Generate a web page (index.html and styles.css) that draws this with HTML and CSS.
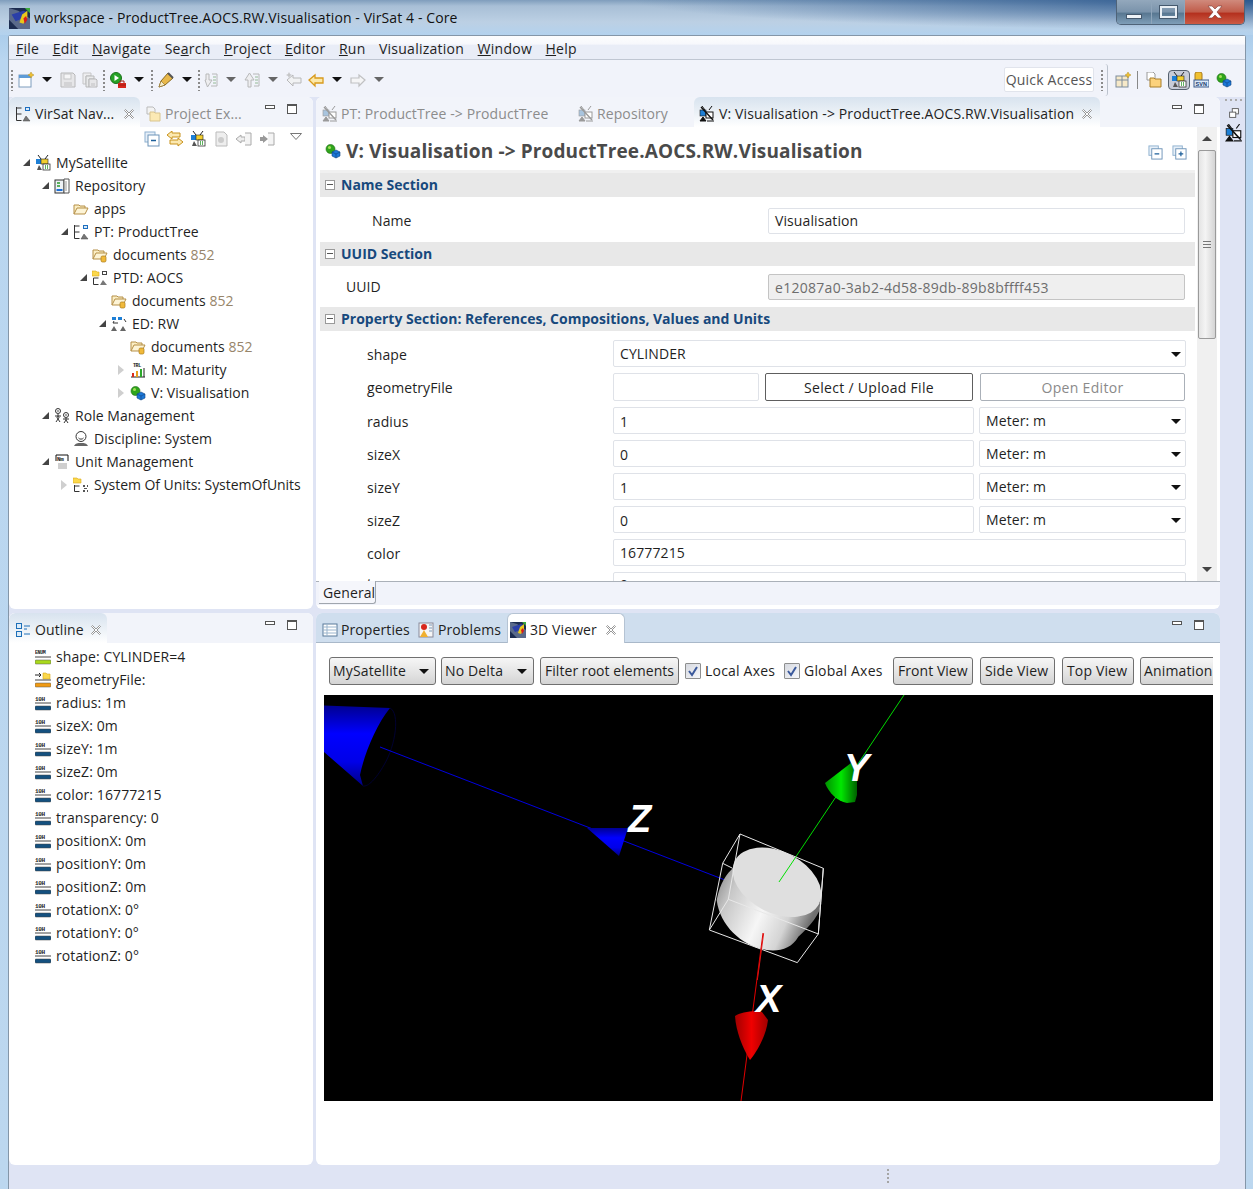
FILE: index.html
```html
<!DOCTYPE html>
<html lang="en">
<head>
    <meta charset="UTF-8">
    <title>workspace - ProductTree.AOCS.RW.Visualisation - VirSat 4 - Core</title>
    <link rel="stylesheet" href="styles.css">
</head>
<body>
    <!-- shared icon set -->
    <svg class="defs" width="0" height="0">
        <symbol id="i-app" viewBox="0 0 16 16">
            <rect width="16" height="16" fill="#1c2c50"/><path d="M0 0l7 2 9 6v8H7L0 9z" fill="#5a6a8a"/><path d="M2 5l9-3 3 1-6 6-3 1z" fill="#2a3fa8"/><path d="M10 5l4-3v5l-3 5-3-1z" fill="#e8c81c"/><path d="M11 8l2-2 1 3-2 3z" fill="#d81c1c"/><path d="M12 0h4v4z" fill="#3ca83c"/>
        </symbol>
        <symbol id="i-sat" viewBox="0 0 16 16">
            <path d="M3 0l3 4M13 0l-3 4" stroke="#222" fill="none"/><rect x="1" y="4" width="6" height="5" fill="#1d7fd6"/><rect x="6" y="4" width="7" height="5" fill="#f3cf2e" stroke="#222" stroke-width=".6"/><rect x="8" y="9" width="7" height="6" fill="#fff" stroke="#333" stroke-width=".8"/><path d="M10 11h1M12 11h1M10 13h1M12 13h1" stroke="#2a9a2a" stroke-width="1.4"/><path d="M2 15l2-5 3 5z" fill="#555"/>
        </symbol>
        <symbol id="i-repo" viewBox="0 0 16 16">
            <rect x="1" y="2" width="9" height="13" fill="#eef2f6" stroke="#333"/><path d="M3 5h3M3 8h3" stroke="#2a9a2a" stroke-width="1.4"/><path d="M2.500 12h6" stroke="#1d6fd6" stroke-width="2"/><path d="M10 1h5v14h-5z" fill="#fff" stroke="#555"/><path d="M12 3v10" stroke="#999"/>
        </symbol>
        <symbol id="i-folder" viewBox="0 0 16 16">
            <path d="M1 13V4h5l1 1h5v2" fill="#fbeec4" stroke="#b58f46"/><path d="M1 13l3-6h11l-3 6z" fill="#fdf4d6" stroke="#b58f46"/>
        </symbol>
        <symbol id="i-docs" viewBox="0 0 16 16">
            <path d="M1 12V3h5l1 1h5v2" fill="#fbeec4" stroke="#b58f46"/><path d="M1 12l3-6h11l-3 6z" fill="#fdf4d6" stroke="#b58f46"/><rect x="9" y="9" width="5" height="6" rx="1.500" fill="#f0b93a" stroke="#a97a1a" stroke-width=".7"/>
        </symbol>
        <symbol id="i-tree" viewBox="0 0 16 16">
            <path d="M1.500 1v13.500M1.500 2h5M1.500 8h5M1.500 14.500h5" stroke="#333" fill="none"/><rect x="10.500" y="1.500" width="4" height="3" fill="#dbe9f6" stroke="#1d6fc0"/><path d="M8 15l3-5 4 5z" fill="#777" stroke="#444" stroke-width=".5"/>
        </symbol>
        <symbol id="i-ptd" viewBox="0 0 16 16">
            <path d="M1.500 8v6.500M1.500 8h5M1.500 14.500h5" stroke="#333" fill="none"/><path d="M0 1h4l1 1h2v4H0z" fill="#fbd84c" stroke="#d8a81a" stroke-width=".6"/><rect x="10.500" y="1.500" width="4" height="3" fill="#fff" stroke="#444"/><path d="M8 15l3-5 4 5z" fill="#777"/>
        </symbol>
        <symbol id="i-ed" viewBox="0 0 16 16">
            <rect x="1" y="1" width="4" height="3" fill="#1d7fd6"/><rect x="7" y="1" width="4" height="3" fill="#1d7fd6"/><path d="M3 5l-1 2h5M13 3l2 3" stroke="#333" fill="none"/><path d="M0 15l3-5 3 5zM9 15l3-5 3 5z" fill="#666"/>
        </symbol>
        <symbol id="i-mat" viewBox="0 0 16 16">
            <path d="M1 15h14" stroke="#222"/><rect x="2" y="11" width="2" height="4" fill="#d82c1c"/><rect x="6" y="9" width="2" height="6" fill="#e8a01c"/><rect x="10" y="7" width="2" height="8" fill="#2ca82c"/><path d="M14 6v9" stroke="#222"/>
        </symbol>
        <symbol id="i-vis" viewBox="0 0 16 16">
            <circle cx="5.500" cy="6" r="4.500" fill="#2fa51c" stroke="#1d6a12" stroke-width=".6"/><circle cx="4.500" cy="4.500" r="1.500" fill="#a4e05a"/><path d="M7 9l4-2 4 2v4l-4 2-4-2z" fill="#1c78d8" stroke="#10457f" stroke-width=".6"/><path d="M7 9l4 2 4-2M11 11v4" stroke="#10457f" stroke-width=".6" fill="none"/>
        </symbol>
        <symbol id="i-role" viewBox="0 0 16 16">
            <g fill="#fff" stroke="#333"><circle cx="4" cy="3" r="2.500"/><path d="M1 8h6M4 6v5M2 14l2-3 2 3"/><circle cx="12" cy="7" r="2.500"/><path d="M9 11h6M12 10v2M10 15l2-3 2 3"/><circle cx="4" cy="9.500" r="1"/></g><circle cx="4" cy="3" r="1" fill="#888"/><circle cx="12" cy="7" r="1" fill="#888"/>
        </symbol>
        <symbol id="i-disc" viewBox="0 0 16 16">
            <circle cx="8" cy="5.500" r="5" fill="#fff" stroke="#333"/><path d="M5.500 7c1 1.500 4 1.500 5 0" stroke="#333" fill="none"/><path d="M1 15c2-3 3-3 7-3s5 0 7 3z" fill="#666"/>
        </symbol>
        <symbol id="i-unit" viewBox="0 0 16 16">
            <path d="M2 7V1h12v6" fill="none" stroke="#111"/><rect x="4" y="9" width="9" height="6" fill="#cfcfcf"/>
        </symbol>
        <symbol id="i-sou" viewBox="0 0 16 16">
            <path d="M0 1h4l1 1h3v4H0z" fill="#fbd84c" stroke="#d8a81a" stroke-width=".6"/><path d="M1.500 8v6.500M1.500 9h5M1.500 14.500h5" stroke="#333" fill="none"/><path d="M10 8h2v2h-2zM14 8h1v2h-1zM10 13h2v2h-2zM14 13h1v2h-1zM11 11h3v1h-3z" fill="#555"/>
        </symbol>
        <symbol id="i-enum" viewBox="0 0 16 16">
            <path d="M0 8h16" stroke="#444"/><rect y="11" width="16" height="4" rx="1" fill="#a9d91c" stroke="#555" stroke-width=".5"/>
        </symbol>
        <symbol id="i-res" viewBox="0 0 16 16">
            <path d="M0 3h6M4 1l2 2-2 2" stroke="#222" fill="none"/><path d="M8 1h3l1 1h3v5H8z" fill="#fbd84c" stroke="#d8a81a" stroke-width=".6"/><path d="M0 8h16" stroke="#444"/><rect y="11" width="16" height="4" rx="1" fill="#f09a14" stroke="#555" stroke-width=".5"/>
        </symbol>
        <symbol id="i-num" viewBox="0 0 16 16">
            <path d="M0 8h16" stroke="#444"/><rect y="11" width="16" height="4" rx="1" fill="#14507f" stroke="#444" stroke-width=".5"/>
        </symbol>
        <symbol id="i-outline" viewBox="0 0 16 16">
            <g fill="#dcebf8" stroke="#1d6fb8"><rect x="1.500" y="1.500" width="5" height="5"/><rect x="1.500" y="9.500" width="5" height="5"/></g><path d="M9 4h6M9 12h6M9 7h3" stroke="#1d6fb8"/>
        </symbol>
        <symbol id="i-project" viewBox="0 0 16 16">
            <path d="M1 1h6l2 2v5H1z" fill="#f3f3f3" stroke="#bbb"/><path d="M4 9V6h4l1 1h5v8H4z" fill="#fbe9b4" stroke="#d8c48e"/>
        </symbol>
        <symbol id="i-nosat" viewBox="0 0 16 16">
            <path d="M3 0l3 4M13 0l-3 4" stroke="currentColor" fill="none"/><rect x="1" y="4" width="6" height="6" fill="var(--ico-a)" stroke="currentColor" stroke-width=".6"/><rect x="7" y="6" width="7" height="6" fill="#fff" stroke="currentColor"/><path d="M1 15l3-4 3 4zM8 15h7" fill="currentColor" stroke="currentColor"/><path d="M2 1l12 13" stroke="currentColor" stroke-width="1.400"/>
        </symbol>
        <symbol id="i-collapse" viewBox="0 0 16 16">
            <rect x="1" y="1" width="10" height="10" fill="#e6eff8" stroke="#8eb0cf"/><rect x="4" y="4" width="11" height="11" fill="#fff" stroke="#6d93b8"/><path d="M7 9.500h5" stroke="#1d5f9a" stroke-width="1.300"/>
        </symbol>
        <symbol id="i-expand" viewBox="0 0 16 16">
            <rect x="1" y="1" width="10" height="10" fill="#e6eff8" stroke="#8eb0cf"/><rect x="4" y="4" width="11" height="11" fill="#fff" stroke="#6d93b8"/><path d="M7 9.500h5M9.500 7v5" stroke="#1d5f9a" stroke-width="1.300"/>
        </symbol>
        <symbol id="i-close" viewBox="0 0 12 12">
            <path d="M1.500 2.500l1-1L6 5l3.500-3.500 1 1L7 6l3.500 3.500-1 1L6 7l-3.500 3.500-1-1L5 6z" fill="#fff" stroke="#8a8a8a" stroke-width=".9"/>
        </symbol>
    </svg>

    <div class="titlebar">
        <svg class="ico app-ico"><use href="#i-app"/></svg>
        <span class="title-text">workspace - ProductTree.AOCS.RW.Visualisation - VirSat 4 - Core</span>
        <div class="win-btns">
            <div class="win-btn win-min"><span></span></div>
            <div class="win-btn win-max"><span></span></div>
            <div class="win-btn win-close">
                <svg width="18" height="14" viewBox="0 0 18 14"><path d="M2 1h4l3 3 3-3h4l-5 6 5 6h-4l-3-3-3 3H2l5-6z" fill="#fff" stroke="#7a3a34" stroke-width=".6"/></svg>
            </div>
        </div>
    </div>

    <div class="shell">
        <nav class="menubar">
            <span><u>F</u>ile</span>
            <span><u>E</u>dit</span>
            <span><u>N</u>avigate</span>
            <span>Se<u>a</u>rch</span>
            <span><u>P</u>roject</span>
            <span><u>E</u>ditor</span>
            <span><u>R</u>un</span>
            <span>Visualization</span>
            <span><u>W</u>indow</span>
            <span><u>H</u>elp</span>
        </nav>

        <div class="toolbar">
            <i class="handle"></i>
            <span class="tool">
                <svg class="ico" viewBox="0 0 16 16"><rect x="1" y="3" width="12" height="12" fill="#fff" stroke="#7c9cbc"/><rect x="1" y="3" width="12" height="3" fill="#5e9bd6"/><path d="M13 0l1 2 2 1-2 1-1 2-1-2-2-1 2-1z" fill="#f0c030" stroke="#b58f20" stroke-width=".5"/></svg>
            </span>
            <i class="drop"></i>
            <span class="tool dim">
                <svg class="ico" viewBox="0 0 16 16"><path d="M1 1h12l2 2v12H1z" fill="#e4e4e4" stroke="#aaa"/><rect x="4" y="2" width="7" height="5" fill="#f6f6f6" stroke="#bbb"/><rect x="4" y="10" width="8" height="5" fill="#ccc"/></svg>
            </span>
            <span class="tool dim">
                <svg class="ico" viewBox="0 0 16 16"><path d="M1 1h8v3H4v8H1z" fill="#eee" stroke="#bbb"/><path d="M4 4h8v3H7v8H4z" fill="#e8e8e8" stroke="#aaa"/><path d="M7 7h7l1 1v7H7z" fill="#e4e4e4" stroke="#aaa"/><rect x="9" y="11" width="4" height="4" fill="#ccc"/></svg>
            </span>
            <i class="handle"></i>
            <span class="tool">
                <svg class="ico" viewBox="0 0 16 16"><circle cx="6" cy="6" r="5.500" fill="#26a326" stroke="#1a701a"/><path d="M4.500 3v6l4.500-3z" fill="#fff"/><rect x="8" y="11" width="8" height="5" fill="#d8261c"/><path d="M10 11V9h4v2M8 13h8" stroke="#a01c14" fill="none"/></svg>
            </span>
            <i class="drop"></i>
            <i class="handle"></i>
            <span class="tool">
                <svg class="ico" viewBox="0 0 16 16"><path d="M1 15l2-6 7-8 5 5-8 7z" fill="#e8b84a" stroke="#8a6a20"/><path d="M1 15l2-6 4 4z" fill="#f6ecc8" stroke="#8a6a20" stroke-width=".6"/><path d="M10 1l5 5" stroke="#555" stroke-width="2"/></svg>
            </span>
            <i class="drop"></i>
            <i class="handle handle-narrow"></i>
            <span class="tool dim">
                <svg class="ico" viewBox="0 0 16 16"><path d="M1 1h3v6h3l-4.500 7L0 7h1z" transform="translate(3 1)" fill="#eee" stroke="#aaa"/><path d="M10 2h5v12h-6" fill="none" stroke="#aaa"/><path d="M11 5h3M11 8h3M11 11h3" stroke="#7eae7e"/></svg>
            </span>
            <i class="drop gray"></i>
            <span class="tool dim">
                <svg class="ico" viewBox="0 0 16 16"><path d="M4 15V8H1l4.500-7L10 8H7v7z" fill="#eee" stroke="#aaa"/><path d="M9 2h6v12h-5" fill="none" stroke="#aaa"/><path d="M11 5h3M11 8h3M11 11h3" stroke="#7eae7e"/></svg>
            </span>
            <i class="drop gray"></i>
            <span class="tool dim">
                <svg class="ico" viewBox="0 0 16 16"><path d="M1 8l6-5v3h8v5H7v3z" fill="#f2f2f2" stroke="#aaa"/><path d="M3 0l1 2 2 1-2 1-1 2-1-2-2-1 2-1z" fill="#bbb"/></svg>
            </span>
            <span class="tool">
                <svg class="ico" viewBox="0 0 16 16"><path d="M1 8l6-5v3h8v5H7v3z" fill="#fce8a8" stroke="#d89a1c" stroke-width="1.300"/></svg>
            </span>
            <i class="drop"></i>
            <span class="tool dim">
                <svg class="ico" viewBox="0 0 16 16"><path d="M15 8L9 3v3H1v5h8v3z" fill="#f6f6f6" stroke="#b5b5b5" stroke-width="1.200"/></svg>
            </span>
            <i class="drop gray"></i>

            <div class="toolbar-right">
                <span class="quick">Quick Access</span>
                <i class="handle"></i>
                <i class="curve"></i>
                <svg class="ico persp" viewBox="0 0 16 16"><rect x="1" y="4" width="12" height="11" fill="#f6e9c8" stroke="#7c8c9c"/><path d="M1 8h12M7 4v11" stroke="#7c8c9c"/><path d="M13 0l1 2 2 1-2 1-1 2-1-2-2-1 2-1z" fill="#f0c030" stroke="#b58f20" stroke-width=".5"/></svg>
                <i class="vsep"></i>
                <svg class="ico persp2" viewBox="0 0 16 16"><path d="M1 0h6l2 2v6H1z" fill="#fff" stroke="#9a9a9a"/><path d="M4 15V6h4l1 1h6v8z" fill="#fcd27c" stroke="#a87f2a"/></svg>
                <span class="persp-active"><svg class="ico"><use href="#i-sat"/></svg></span>
                <svg class="ico persp3" viewBox="0 0 16 16"><rect x="2" y="0" width="7" height="9" rx="2" fill="#f0c030" stroke="#a97a1a"/><rect x="1" y="8" width="15" height="7" fill="#dceafa" stroke="#3a5a8a"/><text x="2.500" y="14" font-size="5.500" font-family="Liberation Sans" font-weight="bold" fill="#16386a">SVN</text></svg>
                <svg class="ico persp4"><use href="#i-vis"/></svg>
            </div>
        </div>

        <div class="workbench">
            <div class="col-left">
                <section class="panel tree-panel">
                    <div class="tabbar">
                        <div class="tab tab-active tab-nav">
                            <svg class="ico"><use href="#i-tree"/></svg>
                            <span>VirSat Nav...</span>
                            <svg class="close"><use href="#i-close"/></svg>
                        </div>
                        <div class="tab tab-idle tab-proj">
                            <svg class="ico"><use href="#i-project"/></svg>
                            <span>Project Ex...</span>
                        </div>
                        <div class="win-ctl"><i class="ctl-min"></i><i class="ctl-max"></i></div>
                    </div>
                    <div class="viewbar">
                        <svg class="ico"><use href="#i-collapse"/></svg>
                        <svg class="ico" viewBox="0 0 16 16"><path d="M0 4l5-4v2h8v4H5v2zM16 11l-5-4v2H3v4h8v2z" fill="#fbe8b0" stroke="#c8921c"/></svg>
                        <svg class="ico"><use href="#i-sat"/></svg>
                        <svg class="ico" viewBox="0 0 16 16"><path d="M3 1h8l3 3v11H3z" fill="#eee" stroke="#bbb"/><circle cx="8" cy="9" r="3" fill="#ccc"/></svg>
                        <svg class="ico" viewBox="0 0 16 16"><path d="M0 8l5-4v2h4v4H5v2z" fill="#eee" stroke="#aaa"/><path d="M9 2h6v12H9" fill="#f4f4f4" stroke="#aaa"/></svg>
                        <svg class="ico" viewBox="0 0 16 16"><path d="M8 8L3 4v2H0v4h3v2z" transform="translate(1)" fill="#999"/><path d="M9 2h6v12H9" fill="#f4f4f4" stroke="#aaa"/></svg>
                        <svg class="view-menu" width="12" height="7" viewBox="0 0 12 7"><path d="M.5.500h11L6 6.500z" fill="#fff" stroke="#777"/></svg>
                    </div>
                    <ul class="tree">
                        <li class="d0"><i class="tw open"></i><svg class="ico"><use href="#i-sat"/></svg><span>MySatellite</span></li>
                        <li class="d1"><i class="tw open"></i><svg class="ico"><use href="#i-repo"/></svg><span>Repository</span></li>
                        <li class="d2"><i class="tw"></i><svg class="ico"><use href="#i-folder"/></svg><span>apps</span></li>
                        <li class="d2"><i class="tw open"></i><svg class="ico"><use href="#i-tree"/></svg><span>PT: ProductTree</span></li>
                        <li class="d3"><i class="tw"></i><svg class="ico"><use href="#i-docs"/></svg><span>documents <em>852</em></span></li>
                        <li class="d3"><i class="tw open"></i><svg class="ico"><use href="#i-ptd"/></svg><span>PTD: AOCS</span></li>
                        <li class="d4"><i class="tw"></i><svg class="ico"><use href="#i-docs"/></svg><span>documents <em>852</em></span></li>
                        <li class="d4"><i class="tw open"></i><svg class="ico"><use href="#i-ed"/></svg><span>ED: RW</span></li>
                        <li class="d5"><i class="tw"></i><svg class="ico"><use href="#i-docs"/></svg><span>documents <em>852</em></span></li>
                        <li class="d5"><i class="tw closed"></i><svg class="ico" viewBox="0 0 16 16"><use href="#i-mat"/><text class="ico-txt" x="3" y="5" font-size="5">TRL</text></svg><span>M: Maturity</span></li>
                        <li class="d5"><i class="tw closed"></i><svg class="ico"><use href="#i-vis"/></svg><span>V: Visualisation</span></li>
                        <li class="d1"><i class="tw open"></i><svg class="ico"><use href="#i-role"/></svg><span>Role Management</span></li>
                        <li class="d2"><i class="tw"></i><svg class="ico"><use href="#i-disc"/></svg><span>Discipline: System</span></li>
                        <li class="d1"><i class="tw open"></i><svg class="ico" viewBox="0 0 16 16"><use href="#i-unit"/><text class="ico-txt" x="3" y="7" font-size="6">Nm</text></svg><span>Unit Management</span></li>
                        <li class="d2 tree-long"><i class="tw closed"></i><svg class="ico"><use href="#i-sou"/></svg><span>System Of Units: SystemOfUnits</span></li>
                    </ul>
                </section>

                <section class="panel outline-panel">
                    <div class="tabbar">
                        <div class="tab tab-active tab-outline">
                            <svg class="ico"><use href="#i-outline"/></svg>
                            <span>Outline</span>
                            <svg class="close"><use href="#i-close"/></svg>
                        </div>
                        <div class="win-ctl"><i class="ctl-min"></i><i class="ctl-max"></i></div>
                    </div>
                    <ul class="outline">
                        <li><svg class="ico" viewBox="0 0 16 16"><use href="#i-enum"/><text class="ico-txt" x="0" y="5" font-size="5">ENUM</text></svg>shape: CYLINDER=4</li>
                        <li><svg class="ico"><use href="#i-res"/></svg>geometryFile:</li>
                        <li><svg class="ico" viewBox="0 0 16 16"><use href="#i-num"/><text class="ico-txt" x="0" y="5.500" font-size="6">10H</text></svg>radius: 1m</li>
                        <li><svg class="ico" viewBox="0 0 16 16"><use href="#i-num"/><text class="ico-txt" x="0" y="5.500" font-size="6">10H</text></svg>sizeX: 0m</li>
                        <li><svg class="ico" viewBox="0 0 16 16"><use href="#i-num"/><text class="ico-txt" x="0" y="5.500" font-size="6">10H</text></svg>sizeY: 1m</li>
                        <li><svg class="ico" viewBox="0 0 16 16"><use href="#i-num"/><text class="ico-txt" x="0" y="5.500" font-size="6">10H</text></svg>sizeZ: 0m</li>
                        <li><svg class="ico" viewBox="0 0 16 16"><use href="#i-num"/><text class="ico-txt" x="0" y="5.500" font-size="6">10H</text></svg>color: 16777215</li>
                        <li><svg class="ico" viewBox="0 0 16 16"><use href="#i-num"/><text class="ico-txt" x="0" y="5.500" font-size="6">10H</text></svg>transparency: 0</li>
                        <li><svg class="ico" viewBox="0 0 16 16"><use href="#i-num"/><text class="ico-txt" x="0" y="5.500" font-size="6">10H</text></svg>positionX: 0m</li>
                        <li><svg class="ico" viewBox="0 0 16 16"><use href="#i-num"/><text class="ico-txt" x="0" y="5.500" font-size="6">10H</text></svg>positionY: 0m</li>
                        <li><svg class="ico" viewBox="0 0 16 16"><use href="#i-num"/><text class="ico-txt" x="0" y="5.500" font-size="6">10H</text></svg>positionZ: 0m</li>
                        <li><svg class="ico" viewBox="0 0 16 16"><use href="#i-num"/><text class="ico-txt" x="0" y="5.500" font-size="6">10H</text></svg>rotationX: 0°</li>
                        <li><svg class="ico" viewBox="0 0 16 16"><use href="#i-num"/><text class="ico-txt" x="0" y="5.500" font-size="6">10H</text></svg>rotationY: 0°</li>
                        <li><svg class="ico" viewBox="0 0 16 16"><use href="#i-num"/><text class="ico-txt" x="0" y="5.500" font-size="6">10H</text></svg>rotationZ: 0°</li>
                    </ul>
                </section>
            </div>

            <div class="col-main">
                <section class="panel editor-panel">
                    <div class="tabbar">
                        <div class="tab tab-idle tab-pt">
                            <svg class="ico ico-off"><use href="#i-nosat"/></svg>
                            <span>PT: ProductTree -&gt; ProductTree</span>
                        </div>
                        <div class="tab tab-idle tab-repo">
                            <svg class="ico ico-off"><use href="#i-nosat"/></svg>
                            <span>Repository</span>
                        </div>
                        <div class="tab tab-active tab-vis">
                            <svg class="ico ico-on"><use href="#i-nosat"/></svg>
                            <span>V: Visualisation -&gt; ProductTree.AOCS.RW.Visualisation</span>
                            <svg class="close"><use href="#i-close"/></svg>
                        </div>
                        <div class="win-ctl"><i class="ctl-min"></i><i class="ctl-max"></i></div>
                    </div>
                    <div class="editor-body">
                        <div class="form-scroll">
                            <div class="form-head">
                                <svg class="ico"><use href="#i-vis"/></svg>
                                <h1>V: Visualisation -&gt; ProductTree.AOCS.RW.Visualisation</h1>
                                <svg class="ico head-act"><use href="#i-collapse"/></svg>
                                <svg class="ico head-act"><use href="#i-expand"/></svg>
                            </div>

                            <h2 class="section"><i class="toggle"></i>Name Section</h2>
                            <div class="row-name">
                                <label>Name</label>
                                <div class="field">Visualisation</div>
                            </div>

                            <h2 class="section"><i class="toggle"></i>UUID Section</h2>
                            <div class="row-uuid">
                                <label>UUID</label>
                                <div class="field disabled">e12087a0-3ab2-4d58-89db-89b8bffff453</div>
                            </div>

                            <h2 class="section"><i class="toggle"></i>Property Section: References, Compositions, Values and Units</h2>
                            <div class="props">
                                <div class="prop"><label>shape</label><div class="field combo wide">CYLINDER<i class="arrow"></i></div></div>
                                <div class="prop prop-tall"><label>geometryFile</label><div class="field file"></div><div class="btn btn-upload">Select / Upload File</div><div class="btn btn-open">Open Editor</div></div>
                                <div class="prop"><label>radius</label><div class="field num">1</div><div class="field combo unit">Meter: m<i class="arrow"></i></div></div>
                                <div class="prop"><label>sizeX</label><div class="field num">0</div><div class="field combo unit">Meter: m<i class="arrow"></i></div></div>
                                <div class="prop"><label>sizeY</label><div class="field num">1</div><div class="field combo unit">Meter: m<i class="arrow"></i></div></div>
                                <div class="prop"><label>sizeZ</label><div class="field num">0</div><div class="field combo unit">Meter: m<i class="arrow"></i></div></div>
                                <div class="prop"><label>color</label><div class="field wide">16777215</div></div>
                                <div class="prop prop-cut"><label>t</label><div class="field wide">0</div></div>
                            </div>
                        </div>
                        <div class="scrollbar">
                            <i class="sb-up"></i>
                            <div class="sb-track"><div class="sb-thumb"><b></b></div></div>
                            <i class="sb-down"></i>
                        </div>
                    </div>
                    <div class="pagebar"><span class="page-tab">General</span></div>
                </section>

                <section class="panel viewer-panel">
                    <div class="tabbar blue">
                        <div class="tab tab-plain tab-props">
                            <svg class="ico" viewBox="0 0 16 16"><rect x="1" y="2" width="14" height="12" fill="#fff" stroke="#5a7a9a"/><path d="M1 5h14M1 8h14M1 11h14M5 2v12" stroke="#9ab4cc"/></svg>
                            <span>Properties</span>
                        </div>
                        <div class="tab tab-plain tab-probs">
                            <svg class="ico" viewBox="0 0 16 16"><rect x="1" y="1" width="14" height="14" fill="#f6f6f6" stroke="#8a8a9a"/><circle cx="6" cy="5" r="3" fill="#d8261c"/><path d="M6 8l4 7H2z" fill="#f0b030"/><path d="M11 3h3M11 6h3M11 9h3" stroke="#7a9aba"/></svg>
                            <span>Problems</span>
                        </div>
                        <div class="tab tab-white tab-3d">
                            <svg class="ico"><use href="#i-app"/></svg>
                            <span>3D Viewer</span>
                            <svg class="close"><use href="#i-close"/></svg>
                        </div>
                        <div class="win-ctl"><i class="ctl-min"></i><i class="ctl-max"></i></div>
                    </div>
                    <div class="viewer-body">
                        <div class="viewer-tools">
                            <div class="vbtn vcombo v-sat">MySatellite<i class="arrow"></i></div>
                            <div class="vbtn vcombo v-delta">No Delta<i class="arrow"></i></div>
                            <div class="vbtn v-filter">Filter root elements</div>
                            <label class="check v-local"><i class="box"><svg width="12" height="12" viewBox="0 0 12 12"><path d="M2 6l3 4 5-8" fill="none" stroke="#3c5a9c" stroke-width="2"/></svg></i>Local Axes</label>
                            <label class="check v-global"><i class="box"><svg width="12" height="12" viewBox="0 0 12 12"><path d="M2 6l3 4 5-8" fill="none" stroke="#3c5a9c" stroke-width="2"/></svg></i>Global Axes</label>
                            <div class="vbtn v-front">Front View</div>
                            <div class="vbtn v-side">Side View</div>
                            <div class="vbtn v-top">Top View</div>
                            <div class="vbtn v-anim">Animation</div>
                        </div>
                        <svg class="scene" width="889" height="406" viewBox="0 0 889 406">
                            <defs>
                                <linearGradient id="cyl" x1="0" y1="0" x2="1" y2="0.35">
                                    <stop offset="0" stop-color="#808080"/>
                                    <stop offset=".22" stop-color="#c8c8c8"/>
                                    <stop offset=".55" stop-color="#f6f6f6"/>
                                    <stop offset=".8" stop-color="#d4d4d4"/>
                                    <stop offset="1" stop-color="#707070"/>
                                </linearGradient>
                                <linearGradient id="cone-b" x1="0" y1="0" x2="0" y2="1">
                                    <stop offset="0" stop-color="#000090"/>
                                    <stop offset=".35" stop-color="#0000ff"/>
                                    <stop offset=".7" stop-color="#0000e8"/>
                                    <stop offset="1" stop-color="#000080"/>
                                </linearGradient>
                                <linearGradient id="cone-g" x1="0" y1="0" x2="1" y2="0">
                                    <stop offset="0" stop-color="#009000"/>
                                    <stop offset=".5" stop-color="#00e800"/>
                                    <stop offset="1" stop-color="#006000"/>
                                </linearGradient>
                                <linearGradient id="cone-r" x1="0" y1="0" x2="1" y2="0">
                                    <stop offset="0" stop-color="#a00000"/>
                                    <stop offset=".5" stop-color="#f00000"/>
                                    <stop offset="1" stop-color="#a00000"/>
                                </linearGradient>
                            </defs>

                            <path d="M0 10.500L66 13C52 30 40 60 36 80L39 91L0 57z" fill="url(#cone-b)"/>
                            <path d="M66 13C76 18 72 50 60 70C52 84 44 92 39 91" fill="none" stroke="#000030"/>
                            <path d="M56 52L401 185" stroke="#0000e0" stroke-width="1"/>
                            <path d="M263 133L304 133L295 161z" fill="url(#cone-b)"/>

                            <path d="M580 0L455 187" stroke="#00d800" stroke-width="1"/>
                            <path d="M527 68L533 82L533 100L531 107L523 108C513 106 505 98 501 88z" fill="url(#cone-g)"/>

                            <g transform="translate(336 85) scale(.3333)">
                                <path d="M170 360C180 310 200 280 222 262L484 370C482 400 450 440 415 470C395 505 360 515 320 510C250 500 180 440 170 360z" fill="url(#cyl)"/>
                                <ellipse cx="351" cy="307" rx="142" ry="92" transform="rotate(27 351 307)" fill="#dfdfdf"/>
                                <g fill="none" stroke="#e8e8e8" stroke-width="3">
                                    <path d="M240 162L490 265L475 462L412 548L148 450L205 358L240 162L188 250L148 450"/>
                                    <path d="M205 358L475 462M490 265L475 462M188 250L218 265"/>
                                </g>
                                <path d="M357 306L407 232" stroke="#00e000" stroke-width="3" fill="none"/>
                                <path d="M311 460L292 600" stroke="#e02020" stroke-width="3"/>
                            </g>
                            <path d="M439 238L417 406" stroke="#e00000" stroke-width="1"/>
                            <path d="M411 321C416 317 432 315 438 317L444 325C442 342 432 358 426 365C418 352 412 336 411 321z" fill="url(#cone-r)"/>

                            <text class="axis" x="304" y="137">Z</text>
                            <text class="axis" x="520" y="86">Y</text>
                            <text class="axis" x="432" y="317">X</text>
                        </svg>
                    </div>
                </section>
            </div>

            <aside class="trim">
                <i class="trim-dots"></i>
                <svg class="ico trim-restore" viewBox="0 0 16 16"><rect x="6" y="3" width="7" height="6" fill="#fff" stroke="#555"/><rect x="3" y="7" width="7" height="6" fill="#fff" stroke="#555"/></svg>
                <svg class="ico ico-on trim-ico"><use href="#i-nosat"/></svg>
            </aside>
        </div>
        <div class="statusbar"><i class="status-dots"></i></div>
    </div>
</body>
</html>
```

FILE: styles.css
```css
:root {
    --frame: #dfe4f4;
    --tabbar: #f2f4fa;
    --border: #d7dbe4;
    --text: #1f1f1f;
    --section: #e8e8e8;
    --section-text: #17497d;
    --ico-a: #1d7fd6;
}

* {
    margin: 0;
    padding: 0;
    box-sizing: border-box;
}

html, body {
    width: 1253px;
    height: 1189px;
    overflow: hidden;
}

body {
    font-family: "Open Sans", "Noto Sans", sans-serif;
    font-size: 14px;
    line-height: 18px;
    letter-spacing: .1px;
    color: var(--text);
    background: linear-gradient(180deg, #8fb0d0 0, #a9cbea 30px, #b9d6f0 60px, #bcd7ef 100%);
}

.defs {
    position: absolute;
}

ul {
    list-style: none;
}

i {
    display: block;
    font-style: normal;
}

.ico {
    width: 16px;
    height: 16px;
    flex: none;
    display: block;
}

.ico-txt {
    font-family: "Liberation Mono", monospace;
    font-weight: 700;
    letter-spacing: -.4px;
    fill: #222;
}

.close {
    width: 12px;
    height: 12px;
    flex: none;
}

/* window title */
.titlebar {
    height: 35px;
    display: flex;
    align-items: flex-start;
    padding-left: 9px;
    background:
        radial-gradient(ellipse 620px 30px at 100% 0, rgba(40, 85, 140, .95), rgba(40, 85, 140, 0)),
        linear-gradient(180deg, #7f9dbc 0, #a8bfd6 6px, #bcd0e4 22px, #b3d2ee 35px);
}

.app-ico {
    width: 21px;
    height: 21px;
    margin-top: 8px;
}

.title-text {
    margin: 8px 0 0 4px;
    font-size: 14px;
    line-height: 20px;
    color: #111;
}

.win-btns {
    display: flex;
    margin-left: auto;
    margin-right: 8px;
    height: 25px;
    border: 1px solid #4f6378;
    border-top: 0;
    border-radius: 0 0 5px 5px;
    overflow: hidden;
}

.win-btn {
    display: flex;
    align-items: center;
    justify-content: center;
    border-right: 1px solid #8fa5ba;
    background: linear-gradient(180deg, #93a8bc 0, #7a93ab 50%, #587791 55%, #7f9eb8 100%);
}

.win-min {
    width: 35px;
}

.win-min span {
    width: 16px;
    height: 5px;
    margin-top: 8px;
    background: #eef3f8;
    border: 1px solid #45596e;
}

.win-max {
    width: 33px;
}

.win-max span {
    width: 17px;
    height: 12px;
    border: 2px solid #e8eef4;
    outline: 1px solid #45596e;
}

.win-close {
    width: 59px;
    border-right: 0;
    background: linear-gradient(180deg, #d08a7c 0, #c05c4a 50%, #b4301e 55%, #cc5a44 100%);
}

/* main shell */
.shell {
    margin-left: 8px;
    width: 1238px;
    height: 1154px;
    background: var(--frame);
    border: 1px solid #8496a8;
    border-bottom: 0;
    border-radius: 3px 3px 0 0;
}

.menubar {
    height: 24px;
    display: flex;
    align-items: center;
    gap: 13.500px;
    padding: 2px 0 0 7px;
    letter-spacing: .25px;
    background: linear-gradient(180deg, #fcfdfe 0, #f7f8fc 35%, #e9edf7 40%, #e9edf7 100%);
    border-bottom: 1px solid #bfc6d2;
}

.toolbar {
    height: 37px;
    display: flex;
    align-items: center;
    padding-top: 2px;
    background: #f1f3fa;
}

.handle {
    width: 6px;
    height: 22px;
    flex: none;
    background: radial-gradient(circle, #8a8a8a 1px, transparent 1.200px) center top / 2px 4px repeat-y;
}

.handle-narrow {
    width: 4px;
    margin-right: -2px;
}

.tool {
    width: 22px;
    display: flex;
    justify-content: center;
    flex: none;
}

.dim {
    opacity: .8;
}

.drop {
    width: 20px;
    flex: none;
    position: relative;
    height: 5px;
}

.drop::before {
    content: "";
    display: block;
    width: 0;
    margin: 0 auto;
    border: 5px solid transparent;
    border-top: 5px solid #111;
    border-bottom: 0;
}

.drop.gray::before {
    border-top-color: #666;
}

.toolbar-right {
    margin-left: auto;
    display: flex;
    align-items: center;
    height: 100%;
    padding-right: 13px;
}

.quick {
    width: 90px;
    height: 25px;
    background: #fff;
    border: 1px solid #e1e4ec;
    border-radius: 2px;
    color: #555;
    font-size: 14px;
    line-height: 23px;
    letter-spacing: .2px;
    text-align: center;
    white-space: nowrap;
    margin-right: 5px;
}

.curve {
    width: 3px;
    height: 32px;
    border-right: 1px solid #bbc2cd;
    border-radius: 0 3px 3px 0;
    margin-right: 7px;
}

.vsep {
    width: 1px;
    height: 18px;
    background: #888;
    margin: 0 8px 0 6px;
}

.persp-active {
    width: 22px;
    height: 20px;
    margin: 0 3px 0 6px;
    display: flex;
    align-items: center;
    justify-content: center;
    background: #c7ccd8;
    border: 1px solid #55606e;
    border-radius: 4px;
}

.persp4 {
    margin-left: 7px;
}

/* workbench grid */
.workbench {
    display: grid;
    grid-template-columns: 304px 904px 22px;
    column-gap: 3px;
    height: 1068px;
}

.col-left,
.col-main {
    display: grid;
    grid-template-rows: 512px 552px;
    row-gap: 4px;
}

.panel {
    display: flex;
    flex-direction: column;
    background: #fff;
    border-radius: 6px;
    overflow: hidden;
    min-height: 0;
}

.tabbar {
    height: 30px;
    flex: none;
    display: flex;
    background: var(--tabbar);
    position: relative;
}

.tabbar.blue {
    height: 30px;
    background: #cfdeee;
    border-bottom: 1px solid #a9b8c9;
}

.tab {
    display: flex;
    align-items: center;
    height: 30px;
    padding-top: 3px;
    white-space: nowrap;
    flex: none;
}

.tab-active {
    background: linear-gradient(180deg, #d8e3ef 0, #eef3f8 60%, #fff 100%);
    border-radius: 6px 6px 0 0;
}

.tab-idle {
    color: #8c8c8c;
}

.tab-plain {
    color: #222;
}

.tab-white {
    height: 30px;
    background: #fff;
    border: 1px solid #b5c3d3;
    border-bottom: 0;
    border-radius: 6px 6px 0 0;
}

.tab-nav {
    width: 131px;
    padding-left: 6px;
    gap: 4px;
}

.tab-nav .close {
    margin-left: 5px;
}

.tab-proj {
    padding-left: 6px;
    gap: 3px;
}

.tab-outline {
    width: 98px;
    padding-left: 6px;
    gap: 4px;
}

.tab-outline .close {
    margin-left: 2px;
}

.tab-pt {
    width: 262px;
    padding-left: 6px;
    gap: 3px;
}

.tab-repo {
    width: 116px;
    gap: 3px;
}

.tab-vis {
    width: 406px;
    padding-left: 5px;
    gap: 4px;
}

.tab-vis span {
    letter-spacing: .12px;
}

.tab-vis .close {
    margin-left: 3px;
}

.tab-props {
    width: 102px;
    padding-left: 6px;
    gap: 3px;
}

.tab-probs {
    width: 89px;
    gap: 4px;
}

.tab-3d {
    width: 118px;
    padding-left: 2px;
    gap: 4px;
}

.tab-3d .close {
    margin-left: 4px;
}

.win-ctl {
    position: absolute;
    right: 16px;
    top: 7px;
    display: flex;
    gap: 12px;
    align-items: flex-start;
}

.ctl-min {
    width: 10px;
    height: 4px;
    margin-top: 1px;
    border: 1px solid #555;
    background: #fff;
}

.ctl-max {
    width: 10px;
    height: 10px;
    border: 1px solid #555;
    border-top-width: 2px;
    background: #fff;
}

.ico-off {
    color: #9a9a9a;
    --ico-a: #a8c4de;
}

.ico-on {
    color: #111;
    --ico-a: #1d7fd6;
}

/* navigator */
.viewbar {
    height: 24px;
    display: flex;
    align-items: center;
    gap: 7px;
    padding-left: 135px;
    flex: none;
}

.view-menu {
    margin: -6px 0 0 8px;
    flex: none;
}

.tree li {
    height: 23px;
    display: flex;
    align-items: center;
    white-space: nowrap;
    letter-spacing: .05px;
}

.tree .tree-long {
    letter-spacing: -.05px;
}

.tree em {
    font-style: normal;
    color: #97856a;
}

.tw {
    width: 10px;
    height: 10px;
    flex: none;
    margin-right: 2px;
}

.tw.open {
    width: 0;
    height: 0;
    border-bottom: 7px solid #444;
    border-left: 7px solid transparent;
    margin-right: 5px;
}

.tw.closed {
    width: 0;
    height: 0;
    margin-right: 6px;
    border-left: 6px solid #cfcfcf;
    border-top: 5px solid transparent;
    border-bottom: 5px solid transparent;
}

.tree .ico {
    margin-right: 5px;
}

.d0 { padding-left: 14px; }
.d1 { padding-left: 33px; }
.d2 { padding-left: 52px; }
.d3 { padding-left: 71px; }
.d4 { padding-left: 90px; }
.d5 { padding-left: 109px; }

/* outline */
.outline {
    padding: 2px 0 0 26px;
}

.outline li {
    height: 23px;
    display: flex;
    align-items: center;
    gap: 5px;
    white-space: nowrap;
}

/* editor */
.editor-body {
    height: 454px;
    display: flex;
    flex: none;
}

.form-scroll {
    width: 880px;
    height: 454px;
    overflow: hidden;
    padding: 0 1px 0 4px;
}

.form-head {
    height: 46px;
    display: flex;
    align-items: center;
    gap: 5px;
    padding: 4px 0 0 5px;
    border-bottom: 3px solid #f0f0f0;
}

.form-head h1 {
    font-size: 19px;
    line-height: 24px;
    letter-spacing: .14px;
    font-weight: 700;
    color: #4a4a4a;
    white-space: nowrap;
    flex: 1;
}

.head-act {
    width: 15px;
    height: 15px;
    margin: 4px 4px 0 0;
}

.head-act:last-child {
    margin-right: 8px;
}

.section {
    height: 24px;
    display: flex;
    align-items: center;
    gap: 6px;
    padding-left: 5px;
    background: var(--section);
    font-size: 14px;
    font-weight: 700;
    letter-spacing: 0;
    color: var(--section-text);
    white-space: nowrap;
}

.toggle {
    width: 10px;
    height: 10px;
    position: relative;
    background: #fff;
    border: 1px solid #9a9a9a;
}

.toggle::after {
    content: "";
    position: absolute;
    left: 1px;
    top: 3px;
    width: 6px;
    height: 1px;
    background: #555;
}

.row-name,
.row-uuid {
    display: flex;
    align-items: center;
}

.row-name {
    height: 45px;
    padding-top: 2px;
}

.row-name .field {
    line-height: 23px;
}

.row-name label {
    width: 448px;
    padding-left: 52px;
}

.row-uuid {
    height: 41px;
}

.row-uuid label {
    width: 448px;
    padding-left: 26px;
}

.field {
    position: relative;
    height: 26px;
    width: 417px;
    padding: 0 6px;
    line-height: 25px;
    background: #fff;
    border: 1px solid #dfe2e8;
    border-radius: 2px;
    white-space: nowrap;
}

.disabled {
    background: #efefef;
    border-color: #c4c4c4;
    color: #6d6d6d;
    letter-spacing: .28px;
}

.props {
    padding-top: 9px;
    display: flex;
    flex-direction: column;
    gap: 6px;
}

.prop {
    display: flex;
    height: 27px;
    gap: 5px;
    align-items: stretch;
}

.prop-tall {
    height: 28px;
}

.prop label {
    width: 288px;
    padding-left: 47px;
    line-height: 29px;
}

.prop .field {
    height: auto;
}

.prop .num {
    line-height: 27px;
}

.prop-cut label,
.prop-cut .field {
    line-height: 23px;
}

.wide {
    width: 573px;
}

.num {
    width: 361px;
}

.unit {
    width: 207px;
}

.file {
    width: 146px;
}

.arrow {
    position: absolute;
    right: 4px;
    top: 11px;
    width: 0;
    border: 5px solid transparent;
    border-top: 5px solid #111;
    border-bottom: 0;
}

.btn {
    text-align: center;
    line-height: 27px;
    letter-spacing: .3px;
    border: 1px solid #5e5e5e;
    border-radius: 2px;
    background: #fff;
}

.btn-upload {
    width: 208px;
    margin-left: 1px;
}

.btn-open {
    width: 205px;
    margin-left: 2px;
    color: #8a8a8a;
    border-color: #aab0b8;
}

/* scrollbar */
.scrollbar {
    width: 20px;
    margin-left: 1px;
    background: #f0f0f0;
    display: flex;
    flex-direction: column;
    align-items: center;
}

.sb-up,
.sb-down {
    width: 0;
    height: 0;
    border-left: 5px solid transparent;
    border-right: 5px solid transparent;
    margin: 9px 0 9px;
}

.sb-up {
    border-bottom: 5px solid #444;
}

.sb-down {
    border-top: 5px solid #444;
}

.sb-track {
    flex: 1;
    width: 100%;
}

.sb-thumb {
    height: 189px;
    margin: 0 1px;
    display: flex;
    align-items: center;
    justify-content: center;
    background: linear-gradient(90deg, #e4e4e4, #f4f4f4 40%, #d4d4d4);
    border: 1px solid #9a9a9a;
    border-radius: 2px;
}

.sb-thumb b {
    width: 8px;
    height: 8px;
    background: repeating-linear-gradient(180deg, #777 0 1px, transparent 1px 3px);
}

.pagebar {
    height: 24px;
    flex: none;
    background: #f1f3fa;
    border-top: 1px solid #aab0b8;
    padding-left: 3px;
}

.page-tab {
    display: block;
    width: 57px;
    height: 23px;
    margin-top: -1px;
    padding-left: 4px;
    line-height: 24px;
    background: #f5f6fb;
    border: 1px solid #a0a6ae;
    border-width: 0 1px 1px 0;
    border-radius: 0 0 3px 0;
}

/* 3D viewer */
.viewer-body {
    padding: 14px 0 0 8px;
    width: 897px;
    overflow: hidden;
}

.viewer-tools {
    height: 38px;
    width: 889px;
    overflow: hidden;
    display: flex;
    align-items: flex-start;
    padding-left: 5px;
}

.vbtn {
    height: 28px;
    position: relative;
    flex: none;
    padding-left: 3px;
    line-height: 26px;
    letter-spacing: .15px;
    white-space: nowrap;
    border: 1px solid #707070;
    border-radius: 3px;
    background: linear-gradient(180deg, #f6f6f6 0, #e6e6e6 50%, #d4d4d4 100%);
}

.vcombo .arrow {
    right: 6px;
    top: 11px;
}

.v-sat { width: 107px; }
.v-delta { width: 93px; margin-left: 5px; }
.v-filter { width: 139px; margin-left: 6px; padding-left: 4px; letter-spacing: .05px; }
.v-front { width: 80px; margin-left: 9px; padding-left: 4px; letter-spacing: .05px; }
.v-side { width: 75px; margin-left: 7px; padding-left: 4px; }
.v-top { width: 72px; margin-left: 7px; padding-left: 4px; }
.v-anim { width: 80px; margin-left: 6px; }

.check {
    display: flex;
    align-items: center;
    gap: 4px;
    height: 28px;
    flex: none;
    letter-spacing: .2px;
    white-space: nowrap;
}

.v-local { margin-left: 6px; width: 99px; }
.v-global { width: 100px; }

.box {
    width: 16px;
    height: 16px;
    display: flex;
    align-items: center;
    justify-content: center;
    border: 1px solid #8e8f8f;
    border-radius: 1px;
    background: linear-gradient(135deg, #d6d9e0, #f6f7fa);
}

.scene {
    display: block;
    background: #000;
}

.axis {
    font-family: "Liberation Sans", sans-serif;
    font-size: 38px;
    font-weight: 700;
    font-style: italic;
    letter-spacing: 0;
    fill: #fff;
}

/* right trim */
.trim {
    display: flex;
    flex-direction: column;
    align-items: center;
    padding-top: 2px;
    gap: 4px;
}

.trim-dots {
    width: 18px;
    height: 2px;
    background: repeating-linear-gradient(90deg, #aaa 0 2px, transparent 2px 5px);
}

.trim-restore {
    margin-top: 1px;
    width: 14px;
    height: 14px;
}

.trim-ico {
    width: 18px;
    height: 18px;
}

.statusbar {
    height: 24px;
    display: flex;
    justify-content: center;
    align-items: center;
    padding-left: 522px;
}

.status-dots {
    width: 2px;
    height: 16px;
    background: repeating-linear-gradient(180deg, #a5a5a5 0 2px, transparent 2px 4px);
}
```
